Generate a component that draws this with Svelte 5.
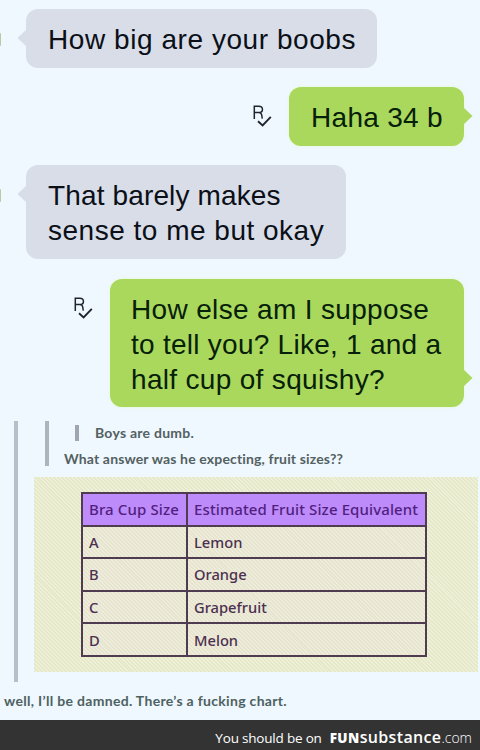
<script lang="ts">
  interface Line {
    text: string;
    tracking: number;
  }

  interface Message {
    side: 'in' | 'out';
    size: string;
    lines: Line[];
  }

  const messages: Message[] = [
    { side: 'in', size: 'first', lines: [{ text: 'How big are your boobs', tracking: 0.56 }] },
    { side: 'out', size: 'short', lines: [{ text: 'Haha 34 b', tracking: 0.3 }] },
    {
      side: 'in',
      size: 'double',
      lines: [
        { text: 'That barely makes', tracking: 0.14 },
        { text: 'sense to me but okay', tracking: 0.5 },
      ],
    },
    {
      side: 'out',
      size: 'long',
      lines: [
        { text: 'How else am I suppose', tracking: 0.34 },
        { text: 'to tell you? Like, 1 and a', tracking: 0.26 },
        { text: 'half cup of squishy?', tracking: 0.32 },
      ],
    },
  ];

  const rows = [
    ['A', 'Lemon'],
    ['B', 'Orange'],
    ['C', 'Grapefruit'],
    ['D', 'Melon'],
  ];
</script>

<main class="page">
  <section class="chat">
    {#each messages as message}
      <div class="message {message.side} {message.size}">
        {#if message.side === 'in'}
          <span class="avatar"></span>
        {:else}
          <svg class="receipt" width="20" height="24" viewBox="0 0 20 24" fill="none" aria-label="Read">
            <path d="M2.3 15V2.3h4.4c5 0 5 6.2 0 6.2H2.3M6.9 8.5c3.6 0 2.7 3.4 3.4 6.1" stroke-width="1.5" />
            <path d="M6 17.3l4.6 4.2 8.2-8.7" stroke-width="1.9" />
          </svg>
        {/if}
        <div class="bubble">
          {#each message.lines as line}
            <div class="line" style="letter-spacing: {line.tracking}px;">{line.text}</div>
          {/each}
          <svg class="tail" width="10" height="20" viewBox="0 0 10 20">
            <path d="M0 1L9.5 10L0 19Z" />
          </svg>
        </div>
      </div>
    {/each}
  </section>

  <section class="post">
    <blockquote class="outer">
      <blockquote class="middle">
        <blockquote class="inner"><span>Boys are dumb.</span></blockquote>
        <p class="answer">What answer was he expecting, fruit sizes??</p>
      </blockquote>
      <div class="chart">
        <table>
          <thead>
            <tr>
              <th>Bra Cup Size</th>
              <th>Estimated Fruit Size Equivalent</th>
            </tr>
          </thead>
          <tbody>
            {#each rows as [cup, fruit]}
              <tr>
                <td>{cup}</td>
                <td>{fruit}</td>
              </tr>
            {/each}
          </tbody>
        </table>
      </div>
    </blockquote>
    <p class="comment">well, I’ll be damned. There’s a fucking chart.</p>
  </section>

  <footer>
    <span class="lead">You should be on</span>
    <span class="brand"><b>FUN</b><span class="name">substance</span><span class="tld">.com</span></span>
  </footer>
</main>

<style>
  :global(body) {
    margin: 0;
  }

  .page {
    display: flex;
    flex-direction: column;
    width: 480px;
    height: 750px;
    overflow: hidden;
    background: #eff7ff;
  }

  .chat {
    display: flex;
    flex-direction: column;
    gap: 19.5px;
    height: 398px;
    padding-top: 9px;
    font-family: 'Liberation Sans', Arial, sans-serif;
    font-size: 28px;
    line-height: 35px;
    color: #0b0f18;
  }

  .message {
    display: flex;
    align-items: flex-start;
  }

  .out {
    justify-content: flex-end;
    padding-right: 16px;
    color: #07200a;
  }

  .bubble {
    position: relative;
    box-sizing: border-box;
    height: 58.5px;
    padding: 13px 0 0 22px;
    border-radius: 12px;
    background: #d8dde7;
  }

  .out .bubble {
    background: #aad85c;
    box-shadow: 0 0 3px #e2fbc4;
  }

  .line {
    white-space: nowrap;
  }

  .first .bubble { width: 351px; }
  .short .bubble { width: 175px; }
  .double .bubble { width: 320px; height: 94px; }
  .long .bubble { width: 354px; height: 128px; }
  .long .line { margin-left: -1px; }

  .tail {
    position: absolute;
    top: 19px;
    fill: #d8dde7;
  }

  .in .tail {
    left: -9px;
    transform: scaleX(-1);
  }

  .out .tail {
    right: -9px;
    fill: #aad85c;
  }

  .long .tail {
    top: 89px;
  }

  .avatar {
    width: 1px;
    height: 13px;
    margin: 24px 25px 0 0;
    border-radius: 0 3px 3px 0;
    background: #bdc8a8;
  }

  .receipt {
    margin: 17px 17px 0 0;
    stroke: #20242c;
  }

  .post {
    height: 313px;
    font-family: Lato, sans-serif;
    font-size: 14px;
    font-weight: 700;
    line-height: 20px;
    color: #53615f;
  }

  blockquote,
  p {
    margin: 0;
  }

  .outer {
    height: 261px;
    margin: 14px 2px 0 14px;
    border-left: 4px solid #b6bfc9;
  }

  .middle {
    height: 45px;
    margin-left: 27px;
    border-left: 4px solid #adb4bd;
    padding-top: 4px;
    box-sizing: border-box;
  }

  .inner {
    display: flex;
    align-items: center;
    height: 16px;
    margin-left: 26px;
    padding-left: 16px;
    border-left: 4px solid #a0a6b1;
    letter-spacing: 0.25px;
  }

  .answer {
    padding: 8px 0 0 15px;
    white-space: nowrap;
    letter-spacing: 0.15px;
  }

  .chart {
    box-sizing: border-box;
    height: 195px;
    margin: 11px 0 0 16px;
    padding: 15px 0 0 47px;
    background: repeating-linear-gradient(45deg, #e5e8c5 0 1.4px, #eff0dc 1.4px 2.8px);
  }

  table {
    width: 346px;
    height: 165px;
    table-layout: fixed;
    border-collapse: collapse;
    font-family: 'Noto Sans', sans-serif;
    font-size: 15px;
    line-height: 20px;
    color: #4b304f;
  }

  th,
  td {
    height: 30.6px;
    padding: 0 0 0 6px;
    border: 2px solid #503c50;
    text-align: left;
    font-weight: 500;
    white-space: nowrap;
    background: rgba(235, 220, 235, 0.2);
  }

  td {
    font-size: 14.7px;
  }

  th {
    color: #51207f;
    background: #bd8cfa;
    letter-spacing: 0.12px;
  }

  th:first-child {
    width: 97px;
  }

  .comment {
    padding: 9px 0 0 4px;
    color: #4d6260;
    white-space: nowrap;
    letter-spacing: 0.31px;
  }

  footer {
    display: flex;
    align-items: center;
    justify-content: flex-end;
    gap: 8px;
    height: 30px;
    padding: 5px 8px 0 0;
    box-sizing: border-box;
    background: #333;
    color: #fff;
    font-family: 'Open Sans', sans-serif;
    line-height: 20px;
    white-space: nowrap;
  }

  .lead {
    font-size: 13.5px;
    letter-spacing: -0.2px;
  }

  .brand {
    font-size: 16px;
  }

  .brand b {
    font-weight: 800;
    font-size: 13.5px;
    letter-spacing: 0.4px;
  }

  .name {
    font-weight: 600;
    letter-spacing: 0.35px;
  }

  .tld {
    font-size: 14px;
    font-weight: 300;
  }
</style>
